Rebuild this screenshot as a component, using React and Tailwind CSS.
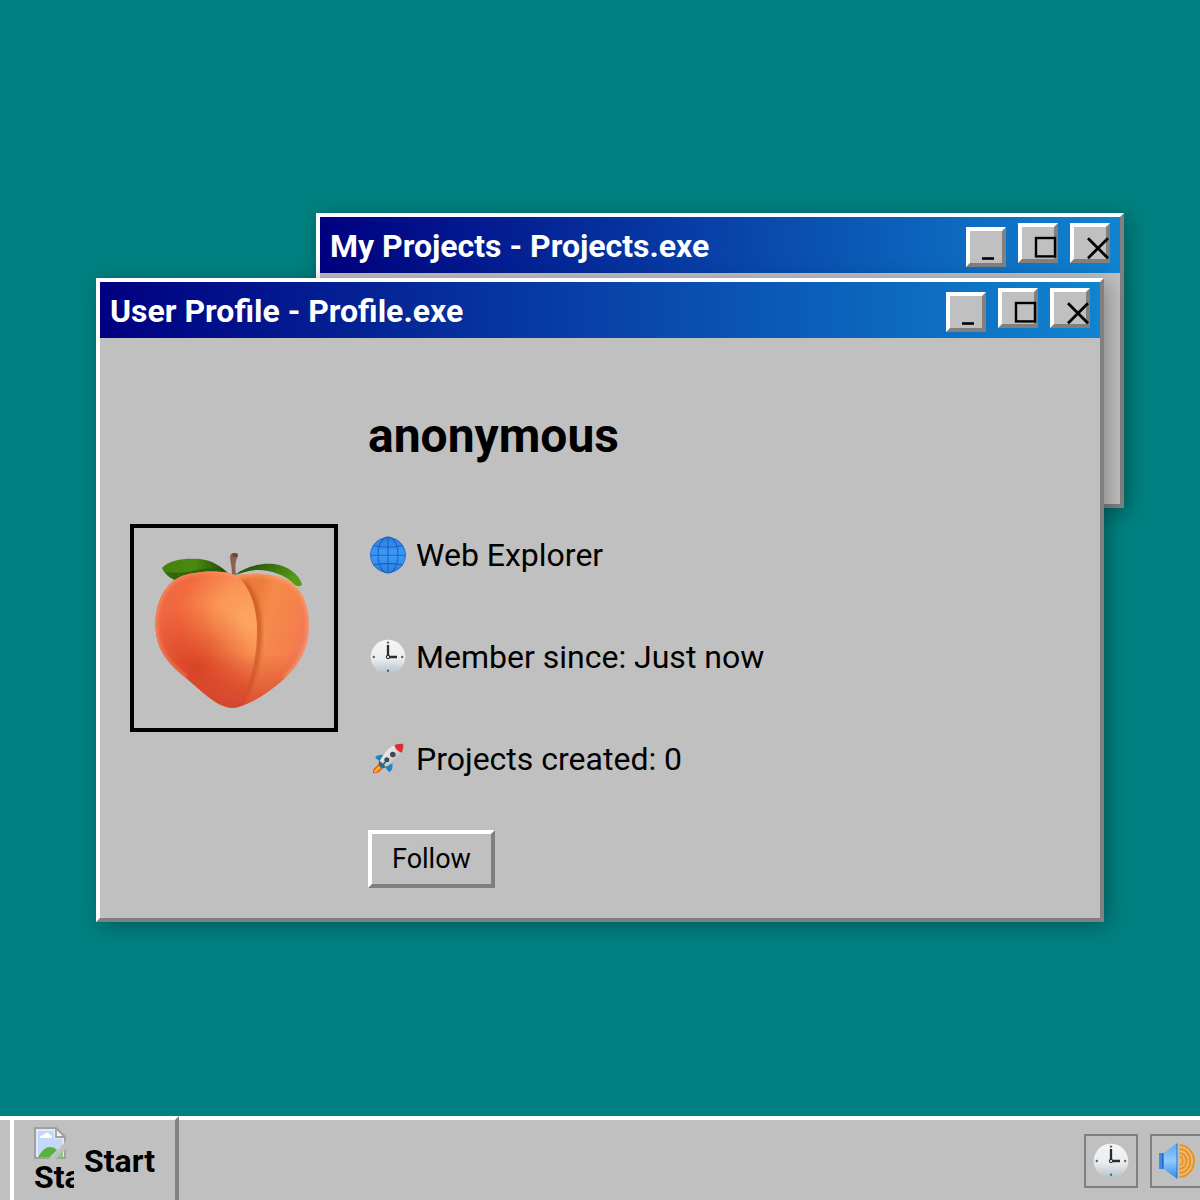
import { useId } from 'react'

const BEVEL = 'border-4 border-t-white border-l-white border-r-[#808080] border-b-[#808080] bg-[#c0c0c0]'

function MinimizeIcon() {
  return (
    <svg viewBox="0 0 36 36" className="size-9 shrink-0 overflow-visible" aria-hidden="true">
      <path d="M12 27.5h12" stroke="#000" strokeWidth="2.6" />
    </svg>
  )
}

function MaximizeIcon() {
  return (
    <svg viewBox="0 0 36 36" className="size-9 shrink-0 overflow-visible" aria-hidden="true">
      <rect x="14" y="11" width="19" height="18.4" fill="none" stroke="#000" strokeWidth="2.4" />
    </svg>
  )
}

function CloseIcon() {
  return (
    <svg viewBox="0 0 36 36" className="size-9 shrink-0 overflow-visible" aria-hidden="true">
      <path d="M14 11.2l20 20M34 11.2l-20 20" stroke="#000" strokeWidth="2.8" />
    </svg>
  )
}

function GlobeIcon() {
  const id = useId()
  return (
    <svg viewBox="0 0 40 40" className="size-10 shrink-0" aria-hidden="true">
      <defs>
        <linearGradient id={id} x1="0" y1="0" x2="0" y2="1">
          <stop offset="0" stopColor="#2b80e2" />
          <stop offset="0.5" stopColor="#3d9bfc" />
          <stop offset="1" stopColor="#2b7fe0" />
        </linearGradient>
      </defs>
      <circle cx="20" cy="20" r="17.8" fill={`url(#${id})`} />
      <g fill="none" stroke="#1c62b8" strokeWidth="1.1">
        <circle cx="20" cy="20" r="17.4" strokeWidth="0.7" />
        <path d="M20 2.4v35.2M2.4 20.300h35.2M5 10.5Q20 13.6 35 10.5M5 30Q20 26.8 35 30" />
        <ellipse cx="20" cy="20" rx="10" ry="18" />
      </g>
    </svg>
  )
}

function ClockIcon() {
  const id = useId()
  return (
    <svg viewBox="0 0 40 40" className="size-10 shrink-0" aria-hidden="true">
      <defs>
        <linearGradient id={id} x1="0" y1="0" x2="0" y2="1">
          <stop offset="0" stopColor="#f6f6f6" />
          <stop offset="0.55" stopColor="#e9ecee" />
          <stop offset="1" stopColor="#b4c0c9" />
        </linearGradient>
      </defs>
      <circle cx="20" cy="20" r="17.3" fill={`url(#${id})`} />
      <path d="M20 8v10M21.5 20h7.5" stroke="#2a2a2a" strokeWidth="2.3" />
      <circle cx="20" cy="20" r="1.6" fill="#fff" stroke="#2a2a2a" strokeWidth="1.1" />
      <g fill="#5d6266">
        <circle cx="20" cy="5.6" r="1.2" />
        <circle cx="20" cy="33.8" r="1.2" />
        <circle cx="5.8" cy="20" r="1.2" />
        <circle cx="34.2" cy="20" r="1.2" />
      </g>
    </svg>
  )
}

function RocketIcon() {
  const id = useId()
  return (
    <svg viewBox="0 0 40 40" className="size-10 shrink-0" aria-hidden="true">
      <defs>
        <linearGradient id={id} x1="0" y1="0" x2="1" y2="1">
          <stop offset="0" stopColor="#fff" />
          <stop offset="0.5" stopColor="#dcdcdc" />
          <stop offset="1" stopColor="#8d8d8d" />
        </linearGradient>
      </defs>
      <path d="M16 15.5L9.5 16.500Q6.500 18 7.500 19L12 22.5z" fill="#1d83c9" />
      <path d="M24.5 24L24.3 29.5Q22.500 34 20.5 32.500L17 28z" fill="#1d83c9" />
      <path d="M11 25L6 29.5Q4.500 32 5 34.600Q8.500 34 11 33L15 29z" fill="#e8542a" />
      <path d="M10.5 27L7.500 30.300Q6 32 5.600 34Q8.500 33 10 31.5L13 29z" fill="#fdb515" />
      <path d="M35.4 4.8Q27.5 4.5 21 9.500Q15 15 11.5 22.5L17.2 28.1Q25.5 24 30 19Q35.5 12.500 35.4 4.8z" fill={`url(#${id})`} />
      <path d="M35.4 4.8Q31 4.200 26.5 6Q27.5 12 33.8 13.700Q35.8 9.500 35.4 4.8z" fill="#dc2f32" />
      <circle cx="24.8" cy="15.5" r="2.8" fill="#42474d" />
      <circle cx="18.8" cy="20.8" r="2.5" fill="#42474d" />
      <path d="M11.5 21.5L18.100 28.1L14.8 29.500L10.300 25.2z" fill="#565b60" />
      <path d="M12 27.200L17 22.2L18 23.5L14 28.6z" fill="#1d6da4" />
    </svg>
  )
}

function SpeakerIcon() {
  const id = useId()
  return (
    <svg viewBox="0 0 40 40" className="size-10 shrink-0" aria-hidden="true">
      <defs>
        <linearGradient id={id} x1="0" y1="0" x2="0" y2="1">
          <stop offset="0" stopColor="#57a9f5" />
          <stop offset="0.5" stopColor="#93cbff" />
          <stop offset="1" stopColor="#2f86e6" />
        </linearGradient>
      </defs>
      <path d="M22.3 3.200A15.500 16.800 0 0 1 22.3 36.800z" fill="#edb565" />
      <g fill="none" stroke="#e08f28" strokeWidth="1.6">
        <path d="M22.3 4A14.700 16 0 0 1 22.3 36" />
        <path d="M22.3 8A11 12 0 0 1 22.3 32" />
        <path d="M22.3 12A7.300 8 0 0 1 22.3 28" />
        <path d="M22.3 16A3.6 4 0 0 1 22.3 24" />
      </g>
      <path d="M7 12L20 2.2V37.8L7 28z" fill={`url(#${id})`} />
      <path d="M2 12h5v16H2z" fill="#3b8de5" />
      <path d="M5.5 12v16M20 2.5v35" stroke="#2169bb" strokeWidth="0.9" />
    </svg>
  )
}

function PeachIcon() {
  const id = useId()
  return (
    <svg viewBox="0 0 200 200" className="size-full" role="img" aria-label="Peach avatar">
      <defs>
        <radialGradient id={`${id}-left`} gradientUnits="userSpaceOnUse" cx="114" cy="92" r="112">
          <stop offset="0" stopColor="#fda761" />
          <stop offset="0.3" stopColor="#fb9656" />
          <stop offset="0.62" stopColor="#f26a3e" />
          <stop offset="0.85" stopColor="#ec6646" />
          <stop offset="1" stopColor="#e6603f" />
        </radialGradient>
        <linearGradient id={`${id}-right`} gradientUnits="userSpaceOnUse" x1="118" y1="90" x2="176" y2="105">
          <stop offset="0" stopColor="#ec7c3c" />
          <stop offset="0.25" stopColor="#f68a4c" />
          <stop offset="0.75" stopColor="#f47f4b" />
          <stop offset="1" stopColor="#f2745e" />
        </linearGradient>
        <radialGradient id={`${id}-shade`} gradientUnits="userSpaceOnUse" cx="62" cy="138" r="64">
          <stop offset="0" stopColor="#c92b14" stopOpacity="0.6" />
          <stop offset="0.5" stopColor="#d0331a" stopOpacity="0.35" />
          <stop offset="1" stopColor="#d93b20" stopOpacity="0" />
        </radialGradient>
        <linearGradient id={`${id}-base`} gradientUnits="userSpaceOnUse" x1="0" y1="125" x2="0" y2="181">
          <stop offset="0" stopColor="#d23f22" stopOpacity="0" />
          <stop offset="1" stopColor="#cf3e2b" stopOpacity="0.8" />
        </linearGradient>
        <linearGradient id={`${id}-leaf`} x1="0" y1="0" x2="1" y2="0">
          <stop offset="0" stopColor="#46800f" />
          <stop offset="0.5" stopColor="#4a8a0f" />
          <stop offset="1" stopColor="#1e4307" />
        </linearGradient>
        <linearGradient id={`${id}-leaf2`} x1="0" y1="0" x2="1" y2="0.4">
          <stop offset="0" stopColor="#1e4307" />
          <stop offset="0.5" stopColor="#39700d" />
          <stop offset="1" stopColor="#5a9a17" />
        </linearGradient>
        <filter id={`${id}-soft`} x="-20%" y="-20%" width="140%" height="140%">
          <feGaussianBlur stdDeviation="2" />
        </filter>
        <clipPath id={`${id}-clip`}>
          <path d="M101 47.5C92 42 65 42 48 48C30 55 21 76 21.500 98C22 124 37 138 52 150C68 163 82 179 99 180C115 178 136 164 151 150C166 136 175 119 175 98C175 76 168 60 153 52C138 44 112 45 101 47.500z" />
        </clipPath>
      </defs>
      <path d="M28 40C36 31 52 30 66 31C78 32 88 39 94 45C80 43 68 44 57 46C51 49 46 53 41 52C35 50 30 45 28 40z" fill={`url(#${id}-leaf)`} />
      <path d="M32 44Q50 46 62 42Q78 38 92 44Q70 43 57 46Q46 52 41 52Q35 49 32 44z" fill="#2a5a08" opacity="0.7" />
      <g clipPath={`url(#${id}-clip)`}>
        <path d="M20 40H180V185H20z" fill={`url(#${id}-right)`} />
        <path d="M110 54C124 70 129 103 122 135C118 153 111 171 102 181" fill="none" stroke="#bd4a1d" strokeWidth="4" opacity="0.85" filter={`url(#${id}-soft)`} />
        <path d="M99 44C116 57 123 79 123 102C123 134 114 164 102 182H15V40z" fill={`url(#${id}-left)`} />
        <path d="M99 44C116 57 123 79 123 102C123 134 114 164 102 182H15V40z" fill={`url(#${id}-shade)`} />
        <path d="M15 120H180V185H15z" fill={`url(#${id}-base)`} />
        <path d="M101 47.500C92 42 65 42 48 48C30 55 21 76 21.500 98C22 124 37 138 52 150" fill="none" stroke="#ffab82" strokeWidth="3" opacity="0.7" filter={`url(#${id}-soft)`} />
        <path d="M151 150C166 136 175 119 175 98C175 76 168 60 153 52C138 44 112 45 101 47.500" fill="none" stroke="#ffb58c" strokeWidth="3" opacity="0.8" filter={`url(#${id}-soft)`} />
      </g>
      <path d="M101 47C112 38 128 35 140 36C155 38 165 47 168 56C167 59 163 59 160 56C151 47 137 42 124 42C115 42 108 45 101 47z" fill={`url(#${id}-leaf2)`} />
      <path d="M98 46C98 38 96 33 96 28C97 24 102 24 104 28C101 33 101 40 102 47z" fill="#8a6252" />
      <ellipse cx="101" cy="27" rx="3" ry="2" fill="#68483b" />
    </svg>
  )
}

function BrokenImageIcon() {
  return (
    <svg viewBox="0 0 32 32" className="size-8 shrink-0" aria-hidden="true">
      <path d="M1 1h21l9 9v21H1z" fill="#c6d8fa" stroke="#a0a0a0" strokeWidth="2" />
      <path d="M3 3h18v8h8v18H3z" fill="#c6d8fa" stroke="#e9effb" strokeWidth="1.5" />
      <path d="M6 11c0-3 3-3 4-3 1-3 5-3 6 0 2 0 3 3 0 3z" fill="#fff" />
      <path d="M4 30c4-7 8-10 12-10 3 0 5 1 7 3l-7 7z" fill="#57b33e" />
      <path d="M32 14L15 32h7L32 22z" fill="#c0c0c0" />
      <path d="M23 30l6-6v6z" fill="#8fca80" />
      <path d="M22 1v9h9z" fill="#f3f3f3" stroke="#a0a0a0" strokeWidth="1.8" />
    </svg>
  )
}

const controls = [
  { label: 'Minimize', Icon: MinimizeIcon, className: 'self-end' },
  { label: 'Maximize', Icon: MaximizeIcon, className: 'self-start' },
  { label: 'Close', Icon: CloseIcon, className: 'self-start' },
]

function Window({ title, className, children }) {
  return (
    <section className={`absolute ${BEVEL} shadow-[4px_4px_20px_rgba(0,0,0,0.3)] ${className}`}>
      <header className="flex h-14 items-center justify-between bg-linear-[90deg,#000080,#1084d0] px-2.5">
        <h2 className="pt-0.5 text-[32px] leading-10 font-bold text-white">{title}</h2>
        <div className="flex h-11 gap-3">
          {controls.map(({ label, Icon, className: align }) => (
            <button key={label} type="button" aria-label={label} className={`flex size-10 items-start justify-start ${BEVEL} ${align}`}>
              <Icon />
            </button>
          ))}
        </div>
      </header>
      {children}
    </section>
  )
}

const facts = [
  { text: 'Web Explorer', Icon: GlobeIcon },
  { text: 'Member since: Just now', Icon: ClockIcon },
  { text: 'Projects created: 0', Icon: RocketIcon },
]

function Profile() {
  return (
    <div className="flex items-center gap-[30px] p-[30px]">
      <div className="size-52 shrink-0 border-4 border-black">
        <PeachIcon />
      </div>
      <div className="flex flex-col items-start">
        <h1 className="mt-10 mb-[71px] text-[48px] leading-14 font-bold">anonymous</h1>
        <ul className="flex flex-col gap-[62px]">
          {facts.map(({ text, Icon }) => (
            <li key={text} className="flex items-center gap-2 text-[32px] leading-10">
              <Icon />
              {text}
            </li>
          ))}
        </ul>
        <button type="button" className={`mt-[51px] px-5 py-2.5 text-[27px] leading-[30px] ${BEVEL}`}>
          Follow
        </button>
      </div>
    </div>
  )
}

// The start button is taller than the bar: its bevel covers the bar's top edge
function Taskbar() {
  return (
    <footer className="flex h-21 shrink-0 items-center border-t-4 border-white bg-[#c0c0c0] px-2.5">
      <button type="button" className={`flex h-22 shrink-0 items-center gap-2.5 px-5 pt-0.5 text-[32px] leading-9 font-bold ${BEVEL}`}>
        <span className="flex w-10 flex-col overflow-hidden text-left" aria-hidden="true">
          <BrokenImageIcon />
          <span>Start</span>
        </span>
        Start
      </button>
      <div className="-mr-3.5 ml-auto flex shrink-0 gap-3 pt-0.5">
        <div className="flex size-[54px] items-center justify-center border-2 border-[#808080]">
          <ClockIcon />
        </div>
        <div className="flex size-[54px] items-center justify-center border-2 border-[#808080]">
          <SpeakerIcon />
        </div>
      </div>
    </footer>
  )
}

export default function App() {
  return (
    <div className="flex h-screen flex-col overflow-hidden bg-[#008080] font-['Roboto','Liberation_Sans',sans-serif] text-black">
      <main className="relative flex-1">
        <Window title="My Projects - Projects.exe" className="top-[213px] right-19 left-79">
          <div className="h-[231px]" />
        </Window>
        <Window title="User Profile - Profile.exe" className="top-[278px] right-24 left-24">
          <Profile />
        </Window>
      </main>
      <Taskbar />
    </div>
  )
}
